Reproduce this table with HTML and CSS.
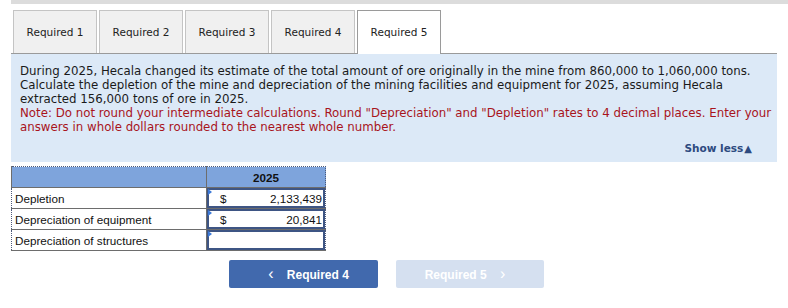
FILE: index.html
```html
<!DOCTYPE html>
<html lang="en">
<head>
    <meta charset="UTF-8">
    <meta name="viewport" content="width=device-width, initial-scale=1.0">
    <title>Required 5</title>
    <link rel="stylesheet" href="styles.css">
</head>
<body>
    <div class="top-bar"></div>

    <div class="tabs">
        <div class="tab">Required 1</div>
        <div class="tab">Required 2</div>
        <div class="tab">Required 3</div>
        <div class="tab">Required 4</div>
        <div class="tab active">Required 5</div>
    </div>

    <div class="panel">
        <p>During 2025, Hecala changed its estimate of the total amount of ore originally in the mine from 860,000 to 1,060,000 tons. Calculate the depletion of the mine and depreciation of the mining facilities and equipment for 2025, assuming Hecala extracted 156,000 tons of ore in 2025.</p>
        <p class="note">Note: Do not round your intermediate calculations. Round "Depreciation" and "Depletion" rates to 4 decimal places. Enter your answers in whole dollars rounded to the nearest whole number.</p>
        <div class="show-less">Show less<span class="arrow">&#9650;</span></div>
    </div>

    <table class="answer">
        <tr class="head">
            <th class="label"></th>
            <th class="year">2025</th>
        </tr>
        <tr>
            <td class="label">Depletion</td>
            <td class="entry"><div class="cell"><span class="cur">$</span><span class="val">2,133,439</span></div></td>
        </tr>
        <tr>
            <td class="label">Depreciation of equipment</td>
            <td class="entry"><div class="cell"><span class="cur">$</span><span class="val">20,841</span></div></td>
        </tr>
        <tr>
            <td class="label">Depreciation of structures</td>
            <td class="entry"><div class="cell"><span class="cur"></span><span class="val"></span></div></td>
        </tr>
    </table>

    <div class="nav">
        <button class="nav-btn prev"><span class="chev">&lsaquo;</span> Required 4</button>
        <button class="nav-btn next">Required 5 <span class="chev">&rsaquo;</span></button>
    </div>
</body>
</html>
```

FILE: styles.css
```css
* {
    margin: 0;
    padding: 0;
    box-sizing: border-box;
}

body {
    font-family: 'DejaVu Sans', Verdana, sans-serif;
    background: #fff;
    color: #1a1a1a;
    width: 788px;
}

.top-bar {
    height: 4px;
    margin-left: 11px;
    background: #dcdcdc;
}

.tabs {
    display: flex;
    align-items: flex-start;
    gap: 2px;
    margin: 6px 11px 0 11px;
    padding-left: 2px;
    border-bottom: 1px solid #9a9a9a;
    height: 44px;
}

.tab {
    width: 84px;
    height: 43px;
    display: flex;
    align-items: center;
    justify-content: center;
    background: #f0f0f0;
    border: 1px solid #c4c4c4;
    border-bottom: none;
    font-size: 10.5px;
    color: #222;
}

/* the open tab runs over the bottom rule */
.tab.active {
    background: #fff;
    border-color: #9a9a9a;
    height: 44px;
    padding-bottom: 1px;
}

.panel {
    margin: 0 11px;
    background: #dce9f7;
    padding: 10px 3px 6px 9px;
    font-size: 11.8px;
    line-height: 14px;
}

.note {
    color: #a8141c;
}

.show-less {
    text-align: right;
    padding-right: 22px;
    margin-top: 7px;
    font-weight: bold;
    font-size: 10.5px;
    color: #2d4a80;
}

.show-less .arrow {
    font-size: 10px;
    margin-left: 1px;
}

.answer {
    margin: 4px 0 0 11px;
    border-collapse: collapse;
    border: 1px dotted #4c5a7a;
    font-family: 'Liberation Sans', Arial, sans-serif;
    font-size: 11.7px;
    color: #111;
}

.answer th,
.answer td {
    height: 21px;
    border: 1px solid #6d6d6d;
}

.answer .head th {
    background: #7ea4dc;
    font-weight: bold;
    border-top: none;
}

.answer td.label {
    width: 195px;
    padding-left: 3px;
    border-left: none;
}

.answer .year {
    width: 119px;
    border-right: none;
}

.answer td.entry {
    padding: 0;
    border-right: none;
    position: relative;
}

.cell {
    display: flex;
    justify-content: space-between;
    align-items: center;
    height: 20px;
    border: 2px solid #3e5584;
    padding: 0 1px 0 11px;
}

/* little blue marker in the corner of each input */
.answer td.entry::before {
    content: "";
    position: absolute;
    top: 1px;
    left: 1px;
    border-top: 3px solid transparent;
    border-bottom: 3px solid transparent;
    border-left: 4px solid #3b79d8;
}

.nav {
    display: flex;
    gap: 18px;
    margin: 9px 0 0 229px;
}

.nav-btn {
    width: 149px;
    height: 28px;
    border: none;
    border-radius: 2px;
    font-family: 'Liberation Sans', Arial, sans-serif;
    font-weight: bold;
    font-size: 12px;
    color: #fff;
}

.nav-btn.prev {
    background: #4169ad;
}

.nav-btn.next {
    background: #d5e0f0;
    width: 148px;
}

.chev {
    font-size: 16px;
    font-weight: normal;
    padding: 0 10px;
}
```
